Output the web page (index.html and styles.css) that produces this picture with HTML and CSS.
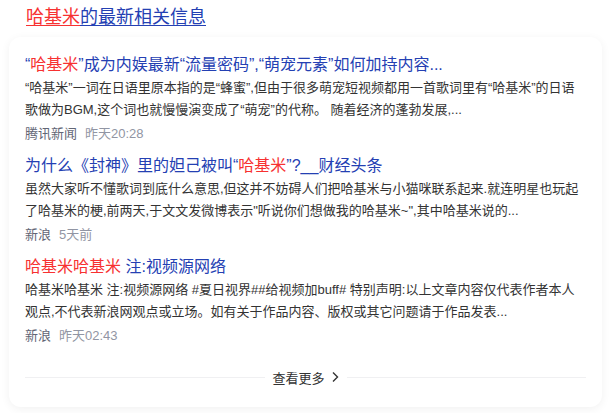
FILE: index.html
```html
<!DOCTYPE html>
<html lang="zh-CN">
<head>
    <meta charset="UTF-8">
    <meta name="viewport" content="width=device-width, initial-scale=1.0">
    <title>哈基米的最新相关信息</title>
    <link rel="stylesheet" href="styles.css">
</head>
<body>
    <div class="page">
        <h2 class="news-title"><a href="#"><em>哈基米</em>的最新相关信息</a></h2>
        <div class="card">
            <div class="item">
                <a class="item-title" href="#">“<em>哈基米</em>”成为内娱最新“流量密码”,“萌宠元素”如何加持内容...</a>
                <p class="summary">“哈基米”一词在日语里原本指的是“蜂蜜”,但由于很多萌宠短视频都用一首歌词里有“哈基米”的日语歌做为BGM,这个词也就慢慢演变成了“萌宠”的代称。 随着经济的蓬勃发展,...</p>
                <div class="source"><span class="site">腾讯新闻</span><span class="time">昨天20:28</span></div>
            </div>
            <div class="item">
                <a class="item-title" href="#">为什么《封神》里的妲己被叫“<em>哈基米</em>”?__财经头条</a>
                <p class="summary">虽然大家听不懂歌词到底什么意思,但这并不妨碍人们把哈基米与小猫咪联系起来.就连明星也玩起了哈基米的梗,前两天,于文文发微博表示"听说你们想做我的哈基米~",其中哈基米说的...</p>
                <div class="source"><span class="site">新浪</span><span class="time">5天前</span></div>
            </div>
            <div class="item">
                <a class="item-title" href="#"><em>哈基米哈基米</em> 注:视频源网络</a>
                <p class="summary">哈基米哈基米 注:视频源网络 #夏日视界##给视频加buff# 特别声明:以上文章内容仅代表作者本人观点,不代表新浪网观点或立场。如有关于作品内容、版权或其它问题请于作品发表...</p>
                <div class="source"><span class="site">新浪</span><span class="time">昨天02:43</span></div>
            </div>
            <div class="more">
                <a href="#">查看更多
                    <svg width="8" height="12" viewBox="0 0 8 12"><path d="M2 1.5 L6.5 6 L2 10.5" fill="none" stroke="#333" stroke-width="1.4"/></svg>
                </a>
            </div>
        </div>
    </div>
</body>
</html>
```

FILE: styles.css
```css
body {
    margin: 0;
    background-color: #fff;
    font-family: "Liberation Sans", Arial, "Noto Sans CJK SC", sans-serif;
    color: #333;
}
.page {
    padding: 0 9px 6px;
}
a {
    text-decoration: none;
}
em {
    font-style: normal;
    color: #f73131;
}
.news-title {
    margin: 0;
    padding: 5px 0 0 17px;
    height: 32px;
    font-size: 18px;
    font-weight: normal;
    line-height: 24px;
}
.news-title a {
    color: #2440b3;
    text-decoration: underline;
    text-underline-offset: 2px;
}
.news-title em {
    text-decoration: underline;
}
.card {
    border-radius: 12px;
    box-shadow: 0 2px 10px rgba(0, 0, 0, 0.06);
    padding: 17px 16px 10px;
}
.item {
    margin-bottom: 10px;
}
.item-title {
    display: block;
    font-size: 16px;
    line-height: 22px;
    color: #2440b3;
}
.summary {
    margin: 1px 0 0;
    font-size: 13px;
    line-height: 22px;
    color: #333;
}
.source {
    margin-top: 2px;
    font-size: 13px;
    line-height: 22px;
}
.site {
    color: #626675;
    margin-right: 8px;
}
.time {
    color: #9195a3;
}
.more {
    display: flex;
    align-items: center;
    gap: 8px;
    height: 40px;
    margin-top: 9px;
    font-size: 13px;
}
.more::before,
.more::after {
    content: "";
    flex: 1;
    height: 1px;
    background-color: #f0f0f2;
}
.more a {
    display: flex;
    align-items: center;
    gap: 6px;
    color: #333;
}
```
